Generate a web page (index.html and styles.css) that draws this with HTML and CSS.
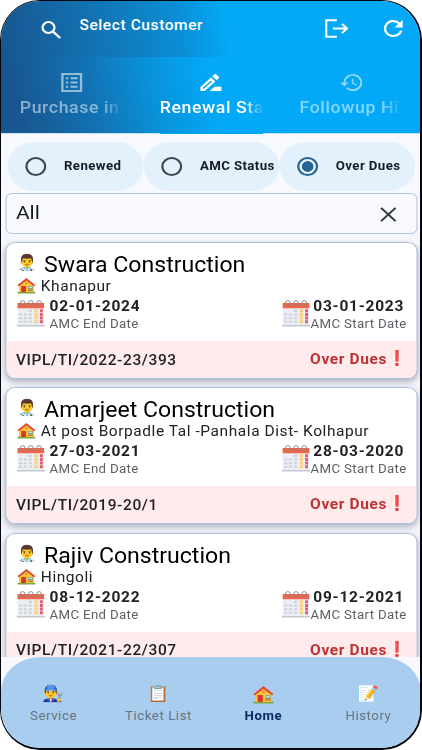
FILE: index.html
```
<!DOCTYPE html>
<html lang="en">
<head>
<meta charset="utf-8">
<title>Select Customer</title>
<link rel="stylesheet" href="styles.css">
</head>
<body>
<svg class="defs" width="0" height="0">
  <symbol id="house" viewBox="0 0 36 36">
    <path d="M1 31h34v4H1z" fill="#7da63c"/>
    <path d="M4 17L18 6l14 11v15H4z" fill="#fdc63a"/>
    <path d="M18 2L1 17l2 3L18 7.500 33 20l2-3z" fill="#df4a32"/>
    <path d="M8 19h9v13H8z" fill="#d8352c"/>
    <path d="M22 19h8v7h-8z" fill="#5b8796"/><path d="M23 20h6v4h-6z" fill="#bfe6ee"/>
    <path d="M21 27h10v2.500H21z" fill="#b5793a"/><circle cx="18" cy="13" r="2.400" fill="#e98b35"/>
  </symbol>
  <symbol id="calendar" viewBox="0 0 28 26" preserveAspectRatio="none">
    <path d="M1 7h26v18H1z" fill="#eceef4"/><path d="M0 24h28v1.500H0z" fill="#c3c7cf"/>
    <path d="M1 3h26V8H1z" fill="#ee6549"/>
    <g fill="none" stroke="#85858a" stroke-width=".9"><circle cx="6" cy="3" r="2.400"/><circle cx="14" cy="3" r="2.400"/><circle cx="22" cy="3" r="2.400"/></g>
    <path d="M12 10.500h3M2.500 14h3M7 14h3M12 14h3M2.500 17.500h3M7 17.500h3M12 17.500h3M2.500 21h3M7 21h3M12 21h3" stroke="#cdd2dc" stroke-width="2"/>
    <path d="M19.200 9v13.500" stroke="#f7d47a" stroke-width="3.400" stroke-dasharray="2.800 .7"/><path d="M24.300 9v13.500" stroke="#e65a69" stroke-width="2.800" stroke-dasharray="2.800 .7"/>
  </symbol>
</svg>
<div class="phone">
<div class="screen">
  <header class="header">
    <div class="appbar">
      <svg class="ic search" viewBox="0 0 18 18"><circle cx="6.500" cy="6.500" r="5.400" fill="none" stroke="#fff" stroke-width="2"/><path d="M10.500 10.500l6.500 6.500" stroke="#fff" stroke-width="2.300"/></svg>
      <h1>Select Customer</h1>
      <svg class="ic logout" viewBox="0 0 24 20"><path d="M12 1H1.500v18H12M8 10h14M17 5l5 5-5 5" fill="none" stroke="#fff" stroke-width="2"/></svg>
      <svg class="ic refresh" viewBox="4 4 16 16"><path d="M17.650 6.350A8 8 0 1 0 19.730 14h-2.080A6 6 0 1 1 12 6c1.660 0 3.140.69 4.220 1.780L13 11h7V4z"/></svg>
    </div>
    <nav class="tabs">
      <div class="tab"><svg class="ic" viewBox="3 3 18 18"><path d="M19 5v14H5V5zm2-2H3v18h18zM17 7h-6v2h6zm0 4h-6v2h6zm0 4h-6v2h6zM9 7H7v2h2zm0 4H7v2h2zm0 4H7v2h2z"/></svg><span>Purchase in</span></div>
      <div class="tab on"><svg class="ic" viewBox="3 3 18 18"><path d="M15 16l-4 4h10v-4zM12.060 7.190L3 16.250V20h3.750l9.060-9.060zM5.920 18H5v-.92l7.060-7.060.92.920zM18.710 8.040a1 1 0 0 0 0-1.410l-2.340-2.340a1 1 0 0 0-1.410 0l-1.830 1.830 3.750 3.750z"/></svg><span>Renewal Sta</span></div>
      <div class="tab"><svg class="ic" viewBox="1 3 21 18"><path d="M13 3a9 9 0 0 0-9 9H1l3.890 3.890.07.14L9 12H6a7 7 0 1 1 2.060 4.940l-1.420 1.420A9 9 0 1 0 13 3zm-1 5v5l4.280 2.540.72-1.210-3.500-2.080V8z"/></svg><span>Followup Hi</span></div>
    </nav>
  </header>
  <div class="filters">
    <div class="pill"><i class="radio"></i><span>Renewed</span></div>
    <div class="pill"><i class="radio"></i><span>AMC Status</span></div>
    <div class="pill"><i class="radio sel"></i><span>Over Dues</span></div>
  </div>
  <div class="field"><span>All</span><svg viewBox="0 0 16 16"><path d="M1 1l14 14M15 1L1 15" fill="none" stroke="#333940" stroke-width="2"/></svg></div>
  <main class="list">
    <article class="card">
      <div class="name"><span class="emoji">👨‍⚕️</span><b>Swara Construction</b></div>
      <div class="addr"><svg class="house"><use href="#house"/></svg><span>Khanapur</span></div>
      <div class="dates"><div class="date"><svg class="cal"><use href="#calendar"/></svg><p><b>02-01-2024</b><small>AMC End Date</small></p></div><div class="date start"><svg class="cal"><use href="#calendar"/></svg><p><b>03-01-2023</b><small>AMC Start Date</small></p></div></div>
      <footer><span>VIPL/TI/2022-23/393</span><span class="due">Over Dues<em>❗</em></span></footer>
    </article>
    <article class="card">
      <div class="name"><span class="emoji">👨‍⚕️</span><b>Amarjeet Construction</b></div>
      <div class="addr"><svg class="house"><use href="#house"/></svg><span>At post Borpadle Tal -Panhala Dist- Kolhapur</span></div>
      <div class="dates"><div class="date"><svg class="cal"><use href="#calendar"/></svg><p><b>27-03-2021</b><small>AMC End Date</small></p></div><div class="date start"><svg class="cal"><use href="#calendar"/></svg><p><b>28-03-2020</b><small>AMC Start Date</small></p></div></div>
      <footer><span>VIPL/TI/2019-20/1</span><span class="due">Over Dues<em>❗</em></span></footer>
    </article>
    <article class="card">
      <div class="name"><span class="emoji">👨‍⚕️</span><b>Rajiv Construction</b></div>
      <div class="addr"><svg class="house"><use href="#house"/></svg><span>Hingoli</span></div>
      <div class="dates"><div class="date"><svg class="cal"><use href="#calendar"/></svg><p><b>08-12-2022</b><small>AMC End Date</small></p></div><div class="date start"><svg class="cal"><use href="#calendar"/></svg><p><b>09-12-2021</b><small>AMC Start Date</small></p></div></div>
      <footer><span>VIPL/TI/2021-22/307</span><span class="due">Over Dues<em>❗</em></span></footer>
    </article>
  </main>
  <div class="navwrap"><nav class="bottom">
    <div><span class="emoji">👨‍🔧</span>Service</div>
    <div><span class="emoji">📋</span>Ticket List</div>
    <div class="active"><svg class="house"><use href="#house"/></svg>Home</div>
    <div><span class="emoji">📝</span>History</div>
  </nav></div>
</div>
</div>
</body>
</html>
```
FILE: styles.css
```
* { box-sizing: border-box; }
body { margin: 0; background: #fff; font-family: Roboto, "Liberation Sans", sans-serif; }
.defs { display: block; }
.phone { width: 422px; height: 750px; overflow: hidden; border: solid #05070c; border-width: 1px 2px 2px 1px; border-radius: 40px; background: #f8f9ff; }
/* The screen is laid out at 380px and widened to fill the frame */
.screen { width: 380px; height: 747px; display: flex; flex-direction: column; transform: scaleX(1.105); transform-origin: 0 0; white-space: nowrap; }
.ic { fill: #fff; display: block; }
.header { height: 133px; flex: none; }
.appbar { height: 56px; display: flex; padding-left: 36px; background: linear-gradient(82deg, #18568f 0, #136fae 20%, #0b8dd4 42%, #03a9f7 54%); }
.search { width: 19px; height: 18px; margin-top: 20px; }
h1 { margin: 15px 0 0 16px; font-size: 14px; line-height: 18px; font-weight: 500; letter-spacing: .55px; color: #fff; width: 205px; }
.logout { width: 22px; height: 19px; margin: 18px 0 0 17px; }
.refresh { width: 18px; height: 17px; margin: 19px 0 0 31px; }
.tabs { height: 77px; display: flex; background: linear-gradient(78deg, #18568f 5%, #1273b4 23%, #0992da 37%, #03a9f7 51%); }
.tab { width: 126.600px; padding: 16px 16px 0 17px; color: #fff; font-size: 16px; font-weight: 500; line-height: 20px; letter-spacing: .55px; background: linear-gradient(#c7e1f5, #c7e1f5) bottom / 100% 1px no-repeat; }
.tab .ic { height: 19px; width: 20px; margin: 0 auto 6px; opacity: .55; }
.tab.on .ic { opacity: 1; }
.tab.on { background: linear-gradient(90deg, #c7e1f5 17px, #03a9f7 17px, #03a9f7 110px, #c7e1f5 110px) bottom / 100% 1px no-repeat; }
.tab span { display: block; width: 94px; overflow: hidden; opacity: .5; -webkit-mask-image: linear-gradient(90deg, #000 80%, transparent); mask-image: linear-gradient(90deg, #000 80%, transparent); }
.tab.on span { opacity: 1; }
.filters { height: 59px; flex: none; display: flex; padding: 8px 0 0 6px; }
.pill { width: 123px; height: 49px; border-radius: 25px; background: #e3f1fc; display: flex; align-items: center; padding: 0 0 1px 15.500px; font-size: 12px; font-weight: 700; letter-spacing: .35px; color: #171c22; }
.pill span { margin-left: 16.500px; }
.radio { width: 19px; height: 19px; border: 2px solid #41464d; border-radius: 50%; flex: none; }
.radio.sel { border-color: #28648f; background: radial-gradient(circle, #28648f 5px, transparent 5.5px); }
.field { flex: none; margin: 0 3.500px 0 4px; height: 41px; border: 1px solid #b0c7df; border-radius: 6px; display: flex; justify-content: space-between; align-items: center; padding: 0 17px 2px 8.500px; font-size: 19px; color: #171c22; }
.field svg { width: 17px; height: 15px; margin-top: 3px; }
.list { flex: 1; min-height: 0; overflow: hidden; padding: 8px 3.500px 0 4px; background: #f5f6fb; }
.card { height: 137px; margin-bottom: 8.300px; background: #fff; border: 1px solid #a9c1da; border-radius: 9px; box-shadow: 0 3px 6px rgba(40,55,80,.35); overflow: hidden; color: #202226; }
.name { height: 33px; padding: 9px 0 0 8.500px; display: flex; line-height: 26px; }
.emoji { font-family: "Noto Color Emoji", sans-serif; font-size: 16px; letter-spacing: 0; width: 20px; display: block; }
.name .emoji { line-height: 22px; }
.name b { font-weight: 400; font-size: 22px; margin-left: 5.500px; color: #000; transform: scaleX(.949); transform-origin: 0 0; }
.house { width: 18px; height: 17px; display: block; }
.addr { height: 19px; padding-left: 8.500px; display: flex; line-height: 20px; font-size: 14px; letter-spacing: .52px; }
.addr .house { margin-top: 1px; }
.addr span { margin-left: 4.500px; }
.dates { display: flex; justify-content: space-between; height: 46px; padding: 3px 8.500px 0 8.500px; }
.date { display: flex; }
.cal { width: 26px; height: 27px; margin-top: 2px; }
.date p { margin: 0 0 0 4.500px; line-height: 16px; }
.date b { display: block; font-size: 14px; font-weight: 700; letter-spacing: .68px; }
.date small { display: block; font-size: 12px; line-height: 20px; letter-spacing: .3px; color: #5d5f64; }
.start p { margin-left: 0; }
.start b { margin-left: 2.500px; }
.card footer { height: 37px; background: #ffeaec; padding: 0 7.500px 0 8.500px; display: flex; justify-content: space-between; align-items: center; font-size: 14px; font-weight: 500; letter-spacing: .57px; }
.due { color: #bd3232; font-weight: 700; display: flex; line-height: 17px; }
.due em { font: 14.500px/16px "Noto Color Emoji"; height: 17px; }
.navwrap { height: 91px; flex: none; background: #f8f9ff; }
.bottom { height: 100%; background: #a9cdef; border-radius: 35px 35px 0 0; display: flex; }
.bottom div { flex: 1; text-align: center; padding-top: 26px; font-size: 12px; letter-spacing: .5px; color: #68747f; line-height: 18px; }
.bottom .emoji { margin: 0 auto 2px; line-height: 22px; }
.bottom .house { width: 19px; height: 19px; margin: 2px auto 3px; }
.bottom .active { color: #0a2862; font-weight: 700; }
```
